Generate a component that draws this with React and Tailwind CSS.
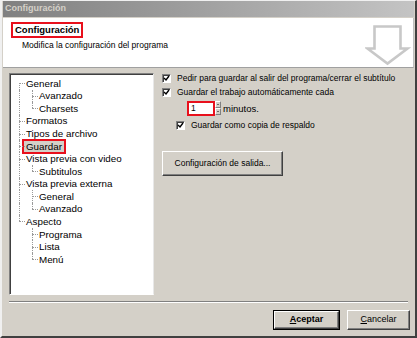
const font = { fontFamily: "'Liberation Sans', Arial, sans-serif" };

const tree = [
  { label: "General", level: 0, cols: ["first"] },
  { label: "Avanzado", level: 1, cols: ["pass", "mid"] },
  { label: "Charsets", level: 1, cols: ["pass", "last"] },
  { label: "Formatos", level: 0, cols: ["mid"] },
  { label: "Tipos de archivo", level: 0, cols: ["mid"] },
  { label: "Guardar", level: 0, cols: ["mid"], selected: true },
  { label: "Vista previa con video", level: 0, cols: ["mid"] },
  { label: "Subtitulos", level: 1, cols: ["pass", "last"] },
  { label: "Vista previa externa", level: 0, cols: ["mid"] },
  { label: "General", level: 1, cols: ["pass", "mid"] },
  { label: "Avanzado", level: 1, cols: ["pass", "last"] },
  { label: "Aspecto", level: 0, cols: ["last"] },
  { label: "Programa", level: 1, cols: ["none", "mid"] },
  { label: "Lista", level: 1, cols: ["none", "mid"] },
  { label: "Menú", level: 1, cols: ["none", "last"] },
];

function Gutter({ kind }) {
  return (
    <div className="relative w-[13px] h-full shrink-0">
      {kind !== "none" && (
        <div
          className={
            "absolute left-[7px] border-l border-dotted border-[#9a9a9a] " +
            (kind === "first" ? "top-1/2 bottom-0" : kind === "last" ? "top-0 bottom-1/2" : "top-0 bottom-0")
          }
        />
      )}
      {kind !== "none" && kind !== "pass" && (
        <div className="absolute left-[7px] right-0 top-1/2 border-t border-dotted border-[#9a9a9a]" />
      )}
    </div>
  );
}

function Check({ className = "" }) {
  return (
    <div className={"w-[9px] h-[9px] bg-white border-t border-l border-[#808080] border-b border-r border-b-white border-r-white shadow-[inset_1px_1px_0_#404040] flex items-center justify-center shrink-0 " + className}>
      <svg width="7" height="7" viewBox="0 0 7 7">
        <path d="M1 3 L3 5 L6 1" stroke="#000" strokeWidth="1.4" fill="none" />
      </svg>
    </div>
  );
}

function Raised({ children, className = "", bold = false }) {
  return (
    <div className={(bold ? "border border-black " : "") + "flex " + className}>
      <div className="flex-1 flex items-center justify-center border border-t-white border-l-white border-b-[#404040] border-r-[#404040] shadow-[inset_-1px_-1px_0_#808080]">
        {children}
      </div>
    </div>
  );
}

export default function App() {
  return (
    <div style={font} className="w-[417px] h-[338px] bg-[#d4d0c8] text-[9px] text-black flex flex-col border-l-2 border-t border-l-[#f0f0f0] border-t-[#f0f0f0] border-r-2 border-b-2 border-r-[#404040] border-b-[#404040] overflow-hidden">
      <div className="h-[16px] shrink-0 mx-[1px] bg-gradient-to-r from-[#808080] to-[#c4c4c4] flex items-center px-[2px] text-[9px] font-bold text-[#d4d0c8]">
        Configuración
      </div>
      <div className="mt-[1px] h-[50px] shrink-0 mx-[1px] bg-white border-b border-[#a0a0a0] border-r border-r-[#c0c0c0] flex justify-between">
        <div className="pl-[8px] pt-[4px]">
          <div className="inline-block border-2 border-[#e8101c] px-[2px] leading-[12px] text-[9.5px] font-bold">Configuración</div>
          <div className="pl-[11px] leading-[12px] mt-[1px] text-[8.5px]">Modifica la configuración del programa</div>
        </div>
        <svg width="46" height="42" viewBox="0 0 46 42" className="mt-[7px] mr-[2px]">
          <path d="M9.5 1.5 H35.5 V23.5 H42.5 L22.5 38.5 L2.5 23.5 H9.5 Z" fill="none" stroke="#c8c8c8" strokeWidth="2.6" strokeLinejoin="miter" />
        </svg>
      </div>
      <div className="flex pl-[7px] pt-[5px] pb-[6px] shrink-0">
        <div className="w-[145px] h-[222px] bg-white border-t border-l border-[#808080] border-b border-r border-b-white border-r-[#e8e8e8] shadow-[inset_1px_1px_0_#404040] pt-[3px] pl-[2px] text-[9.8px]">
          {tree.map((t, i) => (
            <div key={i} className="flex h-[12.57px] items-center">
              {t.cols.map((c, j) => (
                <Gutter key={j} kind={c} />
              ))}
              <span className={"leading-[11px] whitespace-nowrap " + (t.selected ? "border-2 border-[#e8101c] bg-[#d4d0c8] px-[2px] -ml-[3px]" : "pl-[1px]")}>
                {t.label}
              </span>
            </div>
          ))}
        </div>
        <div className="flex-1 pl-[8px] pt-[1px] whitespace-nowrap text-[8.5px]">
          <div className="flex items-center h-[9px] gap-[6px]">
            <Check />
            <span>Pedir para guardar al salir del programa/cerrar el subtítulo</span>
          </div>
          <div className="flex items-center h-[9px] gap-[6px] mt-[5px]">
            <Check />
            <span>Guardar el trabajo automáticamente cada</span>
          </div>
          <div className="flex items-center mt-[3px] ml-[25px]">
            <div className="w-[28px] h-[15px] border-2 border-[#e8101c] bg-white pl-[2px] leading-[11px]">1</div>
            <div className="w-[6px] h-[14px] flex flex-col">
              <div className="flex-1 bg-[#d4d0c8] border border-t-white border-l-white border-b-[#808080] border-r-[#808080] flex items-center justify-center">
                <div className="w-0 h-0 border-x-[1.5px] border-x-transparent border-b-[1.5px] border-b-black" />
              </div>
              <div className="flex-1 bg-[#d4d0c8] border border-t-white border-l-white border-b-[#808080] border-r-[#808080] flex items-center justify-center">
                <div className="w-0 h-0 border-x-[1.5px] border-x-transparent border-t-[1.5px] border-t-black" />
              </div>
            </div>
            <span className="ml-[2px] mt-[2px] text-[9.5px]">minutos.</span>
          </div>
          <div className="flex items-center h-[9px] gap-[6px] mt-[5px] ml-[14px]">
            <Check />
            <span>Guardar como copia de respaldo</span>
          </div>
          <Raised className="w-[121px] h-[25px] mt-[21px]">Configuración de salida...</Raised>
        </div>
      </div>
      <div className="mx-[7px] shrink-0 border-t border-[#808080] border-b border-b-white" />
      <div className="flex-1 flex justify-end gap-[7px] pr-[5px] pt-[7px]">
        <Raised bold className="w-[67px] h-[20px]">
          <span className="font-bold"><u>A</u>ceptar</span>
        </Raised>
        <Raised className="w-[63px] h-[20px]">
          <span><u>C</u>ancelar</span>
        </Raised>
      </div>
    </div>
  );
}
